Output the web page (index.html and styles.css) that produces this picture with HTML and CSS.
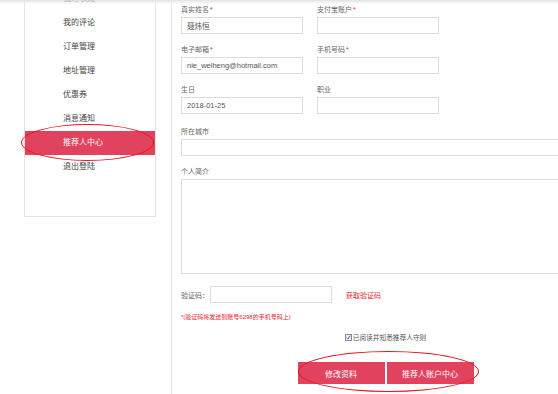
FILE: index.html
```html
<!DOCTYPE html>
<html lang="zh-CN">
<head>
  <meta charset="UTF-8">
  <title>推荐人中心</title>
  <link rel="stylesheet" href="styles.css">
</head>
<body>
  <div class="top-shade"></div>
  <div class="page">
    <div class="side">
      <ul class="menu">
        <li>我的收藏</li>
        <li>我的评论</li>
        <li>订单管理</li>
        <li>地址管理</li>
        <li>优惠券</li>
        <li>消息通知</li>
        <li class="active">推荐人中心</li>
        <li>退出登陆</li>
      </ul>
    </div>

    <div class="main">
      <div class="form">
        <div class="row">
          <div class="field"><label>真实姓名<i>*</i></label><input class="txt" value="聂炜恒"></div>
          <div class="field"><label>支付宝账户<i>*</i></label><input class="txt"></div>
        </div>
        <div class="row">
          <div class="field"><label>电子邮箱<i>*</i></label><input class="txt" value="nie_weiheng@hotmail.com"></div>
          <div class="field"><label>手机号码<i>*</i></label><input class="txt"></div>
        </div>
        <div class="row">
          <div class="field"><label>生日</label><input class="txt" value="2018-01-25"></div>
          <div class="field"><label>职业</label><input class="txt"></div>
        </div>
        <div class="row wide city">
          <div class="field"><label>所在城市</label><input class="txt"></div>
        </div>
        <div class="row wide intro">
          <div class="field"><label>个人简介</label><textarea class="txt area"></textarea></div>
        </div>

        <div class="code-row">
          <span class="code-label">验证码：</span>
          <input class="txt code-input">
          <a class="get-code">获取验证码</a>
        </div>
        <p class="note">*(验证码将发送到账号6298的手机号码上)</p>

        <div class="agree">
          <span class="chk"><svg width="7" height="7" viewBox="0 0 7 7"><path d="M1.2 3.6 L2.8 5.4 L6 1" fill="none" stroke="#2b4ea8" stroke-width="1.3"/></svg></span>
          <span>已阅读并知悉推荐人守则</span>
        </div>

        <div class="actions">
          <button class="btn">修改资料</button>
          <button class="btn">推荐人账户中心</button>
        </div>
      </div>
    </div>
  </div>

  <div class="mark mark-menu"></div>
  <div class="mark mark-btns"></div>
</body>
</html>
```

FILE: styles.css
```css
body {
  margin: 0; background: #fff; color: #555;
  font-family: "Liberation Sans", "Noto Sans CJK SC", sans-serif;
  overflow: hidden;
}
.top-shade {
  position: fixed; top: 0; left: 0; right: 0; height: 4px;
  background: linear-gradient(rgba(225,225,225,0.9), rgba(245,245,245,0.2));
  pointer-events: none; z-index: 5;
}
.page { display: flex; min-height: 100vh; }

.side { width: 171px; flex: none; }
.menu {
  list-style: none; margin: -13px 0 0 24px; padding: 0 0 37px;
  width: 130px; border: 1px solid #e3e3e3; border-top: none;
  background: #fff;
}
.menu li {
  height: 24px; line-height: 24px; padding-left: 38px;
  font-size: 8px; color: #444;
}
.menu li.active { background: #e1435f; color: #fff; }

.main {
  flex: 1; border-left: 1px solid #e3e3e3;
  padding: 3px 0 0 9px; min-width: 0;
}
.form { width: 409px; }
.row { display: flex; gap: 14px; margin-bottom: 9px; }
.row.city { margin-top: 11px; }
.row.intro { margin-bottom: 12px; }
.field { width: 122px; }
.row.wide .field { width: 100%; }
label {
  display: block; font-size: 7px; line-height: 14px; color: #666;
}
label i { font-style: normal; color: #e31f2b; margin-left: 1px; }
.txt {
  display: block; box-sizing: border-box; width: 100%; height: 17px;
  margin: 0; border: 1px solid #dcdcdc; padding: 0 5px;
  font-family: "Liberation Sans", "Noto Sans CJK SC", sans-serif;
  font-size: 7.5px; color: #555; background: #fff; outline: none;
}
.area { height: 95px; resize: none; }

.code-row {
  display: flex; align-items: center; height: 17px;
}
.code-label { width: 29px; font-size: 7px; color: #666; }
.code-input { width: 122px; }
.get-code { margin-left: 14px; font-size: 7px; color: #e3262f; }

.note {
  margin: 10px 0 0; font-size: 6px; line-height: 8px; color: #e8262f;
}

.agree {
  display: flex; justify-content: center; align-items: center; gap: 1px;
  margin-top: 11px; font-size: 6.7px; color: #555;
}
.chk {
  width: 7px; height: 7px; box-sizing: border-box;
  border: 1px solid #8c8c8c; background: #eef0f4;
  display: flex; align-items: center; justify-content: center;
}
.chk svg { display: block; }

.actions {
  display: flex; justify-content: center; gap: 2px; margin-top: 20px;
}
.btn {
  width: 87px; height: 22px; border: none; margin: 0; padding: 0;
  background: #e1435f; color: #fff; font-size: 8px;
  font-family: "Liberation Sans", "Noto Sans CJK SC", sans-serif;
}

.mark {
  position: absolute; border: 1.5px solid #e8141c; border-radius: 50%;
  pointer-events: none; box-sizing: border-box;
}
.mark-menu { left: 21px; top: 124px; width: 133px; height: 37px; }
.mark-btns { left: 298px; top: 351px; width: 181px; height: 41px; }
```
